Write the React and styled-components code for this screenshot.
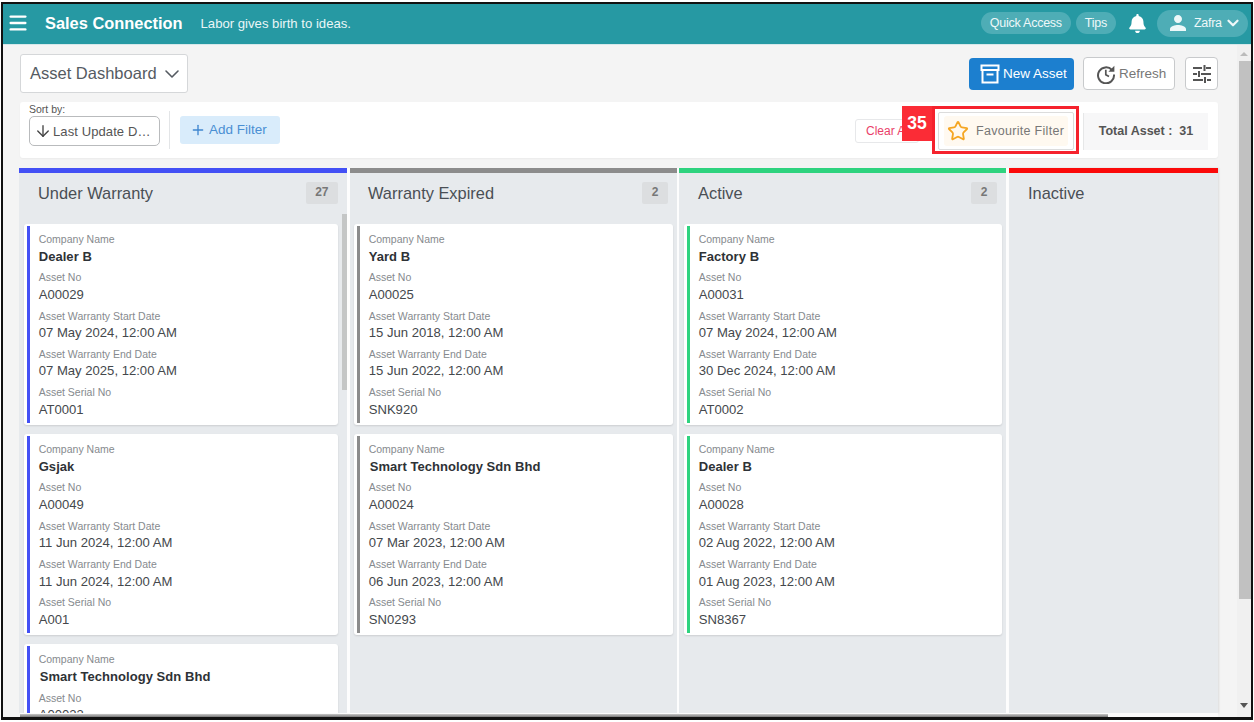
import React from "react";
import styled, { createGlobalStyle } from "styled-components";
import { Menu, ChevronDown, Star, ArrowDown, Plus } from "lucide-react";
import { MdPerson } from "react-icons/md";
import { FaBell } from "react-icons/fa";

const Global = createGlobalStyle`
  html, body { margin: 0; padding: 0; background: #fff; overflow: hidden; }
  body { font-family: "Liberation Sans", Arial, sans-serif; }
  * { box-sizing: border-box; }
`;
const Frame = styled.div`
  width: 1252px; height: 718px; margin: 2px 0 0 1px;
  border: solid #111; border-width: 2px 2px 3px 2px;
  display: flex; flex-direction: column; overflow: hidden; position: relative; background: #f4f4f4;
`;
const Header = styled.header`
  height: 41px; flex: none; background: #2699a3; color: #fff; display: flex; align-items: center;
  padding: 0 3px 2px 4px; border-bottom: 1px solid #d6e8ea;
`;
const Brand = styled.div`font-size: 16.4px; font-weight: 700; margin-left: 16px; white-space: nowrap;`;
const Tagline = styled.div`font-size: 13.15px; margin-left: 18px; color: #eaf6f7; white-space: nowrap;`;
const HeaderRight = styled.div`margin-left: auto; display: flex; align-items: center;`;
const Pill = styled.div`
  height: 22px; border-radius: 11px; background: #4eadb6; font-size: 12.5px; letter-spacing: -0.25px;
  display: flex; align-items: center; padding: 0 9px; margin-left: ${p => p.$ml || 0}px; color: #eef8f9;
`;
const UserPill = styled.div`
  height: 27px; width: 91px; border-radius: 14px; background: #4eadb6; font-size: 12.5px; letter-spacing: -0.3px;
  display: flex; align-items: center; padding-left: 9px; margin-left: 10.5px; gap: 4px; color: #eef8f9;
`;
const Bell = styled(FaBell)`margin-left: 11.5px;`;
const UserChevron = styled(ChevronDown)`margin-left: -2px;`;
const Body = styled.div`flex: 1; display: flex; min-height: 0;`;
const Main = styled.main`flex: none; width: 1234px; padding: 9px 0 4px 17px; display: flex; flex-direction: column; min-height: 0; position: relative; overflow: hidden;`;
const TopRow = styled.div`display: flex; align-items: flex-start; justify-content: space-between; height: 48px; flex: none; padding-right: 19px;`;
const TitleSelect = styled.div`
  width: 168px; height: 39px; background: #fff; border: 1px solid #d5d7d9; border-radius: 3px; white-space: nowrap;
  display: flex; align-items: center; padding-left: 9px; gap: 3px; font-size: 16.5px; color: #555b62;
`;
const Actions = styled.div`display: flex; align-items: center; padding-top: 3px;`;
const PrimaryBtn = styled.div`
  width: 105px; height: 32px; background: #1c7fcf; border-radius: 4px; color: #fff; font-size: 13.5px;
  display: flex; align-items: center; padding-left: 11px; gap: 3px;
`;
const OutlineBtn = styled.div`
  height: 33px; width: ${p => p.$w}px; margin-left: ${p => p.$ml}px; background: #fff; border: 1px solid #c8cacc; border-radius: 4px;
  display: flex; align-items: center; justify-content: ${p => p.$center ? "center" : "flex-start"}; padding-left: ${p => p.$center ? 0 : 12}px; gap: 3px;
  font-size: 13.5px; color: #777;
`;
const FilterBar = styled.div`
  height: 56px; flex: none; width: 1198px; background: #fff; border-radius: 3px; display: flex; align-items: center; padding: 0 10px 0 9px;
  box-shadow: 0 1px 2px rgba(0,0,0,.04); position: relative;
`;
const SortBlock = styled.div`display: flex; flex-direction: column; margin-top: -15px;`;
const SortLabel = styled.div`font-size: 10.5px; color: #555; line-height: 12px; margin-bottom: 1px;`;
const SortSelect = styled.div`
  width: 131px; height: 30px; border: 1px solid #b9bbbd; border-radius: 5px; display: flex; align-items: center; padding-left: 4px; gap: 1px;
  font-size: 13px; color: #555; letter-spacing: .1px; white-space: nowrap; margin-bottom: -4px;
`;
const VDivider = styled.div`width: 1px; height: 38px; background: #e3e5e7; margin: 0 10px 0 9px;`;
const AddFilter = styled.div`
  width: 100px; height: 28px; background: #d9ecfb; border-radius: 3px; color: #4a8fd3; font-size: 13.5px;
  display: flex; align-items: center; padding-left: 10px; gap: 3px; margin-top: -1px;
`;
const FilterRight = styled.div`margin-left: auto; display: flex; align-items: center; height: 100%; padding-top: 2px;`;
const ClearBtn = styled.div`
  width: 64px; height: 24px; border: 1px solid #e7e8ea; border-radius: 3px; color: #ea3f6a; font-size: 12px;
  display: flex; align-items: center; padding-left: 10px; margin-right: 19px; white-space: nowrap; overflow: hidden;
`;
const FavBtn = styled.div`
  width: 136px; height: 38px; border: 1px solid #dcdcdc; border-radius: 2px; padding: 3px 5px; margin-right: 9px;
  display: flex;
`;
const FavInner = styled.div`
  flex: 1; background: #fff9f0; border-radius: 3px; display: flex; align-items: center; padding-left: 3px; gap: 7px; font-size: 12.5px; color: #777; letter-spacing: .3px; white-space: nowrap;
`;
const TotalBox = styled.div`
  width: 125px; height: 37px; background: #f7f7f8; border-left: 1px solid #e6e7e8; display: flex; align-items: center; justify-content: center;
  font-size: 12.5px; font-weight: 700; color: #555; white-space: pre;
`;
const Annot = styled.div`position: absolute; left: 882px; top: 4px; display: flex; align-items: flex-start; pointer-events: none;`;
const AnnotNum = styled.div`
  width: 30px; height: 35px; background: #fb2c36; color: #fff; font-size: 17.5px; font-weight: 700;
  display: flex; justify-content: center; padding-top: 7px;
`;
const AnnotBox = styled.div`width: 147px; height: 48px; border: 3px solid #f5222d;`;
const Board = styled.div`flex: 1; display: flex; margin: 10px 0 0 -1px; min-height: 0; width: 1199px; background: #fdfdfd;`;
const Column = styled.section`
  flex: ${p => p.$fill ? "1 0 0" : "none"}; width: ${p => p.$w}px; margin-left: ${p => p.$ml}px; background: #e7eaed; border-top: 5px solid ${p => p.$color};
  display: flex; flex-direction: column; position: relative; overflow: hidden;
  ${p => p.$fill ? "box-shadow: 1px 0 2px rgba(0,0,0,.1);" : ""}
`;
const ColHead = styled.div`height: 51px; flex: none; display: flex; align-items: center; justify-content: space-between; padding: 0 9px 11px ${p => 19 - p.$shift}px;`;
const ColTitle = styled.div`font-size: 16.4px; color: #4a4f55;`;
const Count = styled.div`
  height: 22px; border-radius: 2px; background: #dcdee0; color: #777; font-size: 12px; font-weight: 700; display: flex; justify-content: center; padding: 3px 9.5px 0;
`;
const ColBody = styled.div`flex: 1; padding: 0 ${p => p.$scroll ? 9 : 4.5}px 0 ${p => 5 - p.$shift}px; display: flex; flex-direction: column; gap: 9px; overflow: hidden; min-height: 0;`;
const Card = styled.article`
  flex: none; height: 201.2px; background: #fff; border-radius: 3px; padding: 2px 2px 2px 2.7px; display: flex; box-shadow: 0 1px 2px rgba(0,0,0,.12);
`;
const Accent = styled.div`width: 3px; flex: none; background: ${p => p.$color};`;
const CardBody = styled.div`padding: 5px 0 0 9px; flex: 1;`;
const Field = styled.div`height: 38.3px;`;
const Label = styled.div`font-size: 10.5px; line-height: 13px; color: #868a8e; padding-top: 2px;`;
const Value = styled.div`font-size: 13.1px; line-height: 18px; color: #44484c; margin-top: 1.6px;`;
const Company = styled(Value)`font-weight: 700; font-size: 13px; color: #2e3236; letter-spacing: .05px; padding-left: ${p => p.$pad ? 1 : 0}px;`;
const InnerScroll = styled.div`position: absolute; right: 0; top: 41px; width: 5px; height: 176px; background: #c4c6c6;`;
const PageScroll = styled.div`flex: none; width: 14px; background: #f0f0f0; position: relative; display: flex; flex-direction: column; align-items: center;`;
const ScrollThumb = styled.div`width: 12px; height: 538px; margin: 16px 0 0 2px; background: #c1c1c1;`;
const HScrollTrack = styled.div`position: absolute; left: 17px; width: 1198px; bottom: 0; height: 4px; background: #fbfbfb;`;
const HScroll = styled.div`height: 3px; width: 1088px; margin-top: 1px; background: linear-gradient(#c8c8c8, #777);`;
const TriUp = styled.div`position: absolute; top: 7px; width: 0; height: 0; border: 4px solid transparent; border-top: 0; border-bottom: 4px solid #bbb;`;
const TriDown = styled.div`position: absolute; bottom: 9px; width: 0; height: 0; border: 4px solid transparent; border-bottom: 0; border-top: 5px solid #555;`;

const columns = [
  { title: "Under Warranty", color: "#4350f5", count: 27, scroll: true, width: 328, ml: 0, shift: 0, cards: [
    ["Dealer B", "A00029", "07 May 2024, 12:00 AM", "07 May 2025, 12:00 AM", "AT0001"],
    ["Gsjak", "A00049", "11 Jun 2024, 12:00 AM", "11 Jun 2024, 12:00 AM", "A001"],
    ["Smart Technology Sdn Bhd", "A00023", "", "", ""],
  ]},
  { title: "Warranty Expired", color: "#8c8c8c", count: 2, width: 327, ml: 3, shift: 1, cards: [
    ["Yard B", "A00025", "15 Jun 2018, 12:00 AM", "15 Jun 2022, 12:00 AM", "SNK920"],
    ["Smart Technology Sdn Bhd", "A00024", "07 Mar 2023, 12:00 AM", "06 Jun 2023, 12:00 AM", "SN0293"],
  ]},
  { title: "Active", color: "#2fd37f", count: 2, width: 327, ml: 2, shift: 0, cards: [
    ["Factory B", "A00031", "07 May 2024, 12:00 AM", "30 Dec 2024, 12:00 AM", "AT0002"],
    ["Dealer B", "A00028", "02 Aug 2022, 12:00 AM", "01 Aug 2023, 12:00 AM", "SN8367"],
  ]},
  { title: "Inactive", color: "#fb0a0a", width: 209, ml: 3, shift: 0, last: true, cards: [] },
];

const ArchiveIcon = () => (
  <svg width="20" height="20" viewBox="0 0 20 20" fill="none" stroke="#fff" strokeWidth="2">
    <rect x="1.5" y="1.5" width="17" height="4.5" />
    <path d="M2.5 6v12.5h15V6" />
    <path d="M6.5 10.5h7" />
  </svg>
);
const RefreshIcon = () => (
  <svg width="20" height="20" viewBox="0 0 20 20" fill="none" stroke="#555" strokeWidth="2">
    <path d="M16 6A8 8 0 1 0 18 10.5" />
    <path d="M18.4 1.8v6h-6z" fill="#555" stroke="none" />
    <path d="M9.8 5.8v5l3.2 1.8" strokeWidth="1.7" />
  </svg>
);
const TuneIcon = () => (
  <svg width="20" height="20" viewBox="0 0 20 20" fill="none" stroke="#555" strokeWidth="2">
    <path d="M1 4h9M14 4h5M12.5 1v6" />
    <path d="M1 10h4M9 10h10M7 7v6" />
    <path d="M1 16h10M15 16h4M13 13v6" />
  </svg>
);

const AssetCard = ({ data, color }) => {
  const [company, no, start, end, serial] = data;
  return (
    <Card>
      <Accent $color={color} />
      <CardBody>
        <Field><Label>Company Name</Label><Company $pad={company.startsWith("Smart")}>{company}</Company></Field>
        <Field><Label>Asset No</Label><Value>{no}</Value></Field>
        <Field><Label>Asset Warranty Start Date</Label><Value>{start}</Value></Field>
        <Field><Label>Asset Warranty End Date</Label><Value>{end}</Value></Field>
        <Field><Label>Asset Serial No</Label><Value>{serial}</Value></Field>
      </CardBody>
    </Card>
  );
};

export default function App() {
  return (
    <Frame>
      <Global />
      <Header>
        <Menu size={22} strokeWidth={2.6} />
        <Brand>Sales Connection</Brand>
        <Tagline>Labor gives birth to ideas.</Tagline>
        <HeaderRight>
          <Pill>Quick Access</Pill>
          <Pill $ml={5}>Tips</Pill>
          <Bell size={19} />
          <UserPill><MdPerson size={24} />Zafra<UserChevron size={18} strokeWidth={3} /></UserPill>
        </HeaderRight>
      </Header>
      <Body>
        <Main>
          <TopRow>
            <TitleSelect>Asset Dashboard<ChevronDown size={24} strokeWidth={1.6} /></TitleSelect>
            <Actions>
              <PrimaryBtn><ArchiveIcon />New Asset</PrimaryBtn>
              <OutlineBtn $w={92} $ml={9}><RefreshIcon />Refresh</OutlineBtn>
              <OutlineBtn $w={33} $ml={10} $center><TuneIcon /></OutlineBtn>
            </Actions>
          </TopRow>
          <FilterBar>
            <SortBlock>
              <SortLabel>Sort by:</SortLabel>
              <SortSelect><ArrowDown size={18} strokeWidth={1.8} color="#444" />Last Update D…</SortSelect>
            </SortBlock>
            <VDivider />
            <AddFilter><Plus size={16} color="#3f86d0" />Add Filter</AddFilter>
            <FilterRight>
              <ClearBtn>Clear All</ClearBtn>
              <FavBtn><FavInner><Star size={22} color="#f5a623" strokeWidth={2} />Favourite Filter</FavInner></FavBtn>
              <TotalBox>{"Total Asset :  31"}</TotalBox>
            </FilterRight>
            <Annot><AnnotNum>35</AnnotNum><AnnotBox /></Annot>
          </FilterBar>
          <Board>
            {columns.map(c => (
              <Column key={c.title} $fill={c.last} $w={c.width} $ml={c.ml} $color={c.color}>
                <ColHead $shift={c.shift}>
                  <ColTitle>{c.title}</ColTitle>
                  {c.count && <Count>{c.count}</Count>}
                </ColHead>
                <ColBody $scroll={c.scroll} $shift={c.shift}>
                  {c.cards.map((d, i) => <AssetCard key={i} data={d} color={c.color} />)}
                </ColBody>
                {c.scroll && <InnerScroll />}
              </Column>
            ))}
          </Board>
          <HScrollTrack><HScroll /></HScrollTrack>
        </Main>
        <PageScroll>
          <TriUp />
          <ScrollThumb />
          <TriDown />
        </PageScroll>
      </Body>
    </Frame>
  );
}
